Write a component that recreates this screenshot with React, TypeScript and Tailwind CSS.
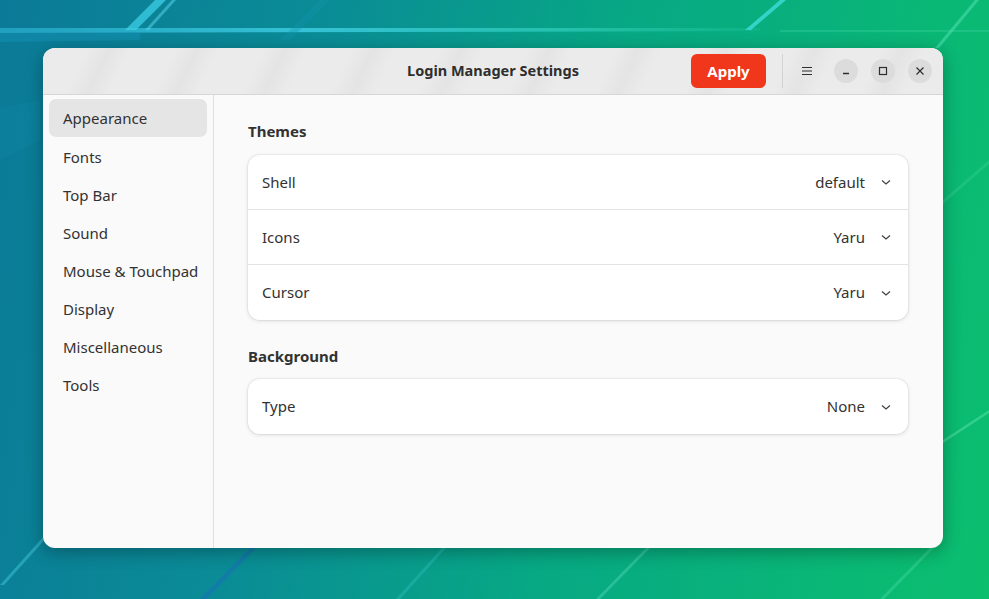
import React from "react";

const Chevron = () => (
  <svg width="12" height="12" viewBox="0 0 12 12" className="ml-[15px] text-[#3d3d3d]">
    <path d="M2 4.5 L6 8 L10 4.5" fill="none" stroke="currentColor" strokeWidth="1.1" />
  </svg>
);

const Row = ({ label, value, last }: { label: string; value: string; last?: boolean }) => (
  <div className={`flex h-[55px] items-center pl-[14px] pr-[16px] ${last ? "" : "border-b border-[#e3e3e3]"}`}>
    <span className="flex-1">{label}</span>
    <span>{value}</span>
    <Chevron />
  </div>
);

export default function App() {
  const items = ["Appearance", "Fonts", "Top Bar", "Sound", "Mouse & Touchpad", "Display", "Miscellaneous", "Tools"];
  return (
    <div
      className="relative w-[989px] h-[599px] overflow-hidden bg-[linear-gradient(100deg,#0b7a98_0%,#0a8c96_30%,#07a884_58%,#0bbf6e_100%)] pt-[48px] pl-[43px]"
      style={{ fontFamily: '"Noto Sans", "Open Sans", sans-serif' }}
    >
      <svg className="absolute inset-0" width="989" height="599" viewBox="0 0 989 599">
        <defs>
          <linearGradient id="hl" x1="0" y1="0" x2="1" y2="0">
            <stop offset="0" stopColor="#2fb8d8" stopOpacity="0.6" />
            <stop offset="0.4" stopColor="#3fd0e6" stopOpacity="0.8" />
            <stop offset="0.75" stopColor="#40e0d0" stopOpacity="0.5" />
            <stop offset="1" stopColor="#40e0c0" stopOpacity="0.1" />
          </linearGradient>
        </defs>
        <path d="M0 28 L760 28 L760 31 L0 33 Z" fill="url(#hl)" />
        <path d="M0 33 L140 32 L140 40 L0 42 Z" fill="#1a9cc0" opacity="0.35" />
        <path d="M125 30 L155 0 L166 0 L136 30 Z" fill="#3ccde6" opacity="0.75" />
        <path d="M145 30 L172 0 L176 0 L149 30 Z" fill="#5ad8ec" opacity="0.5" />
        <path d="M745 30 L780 0 L786 0 L751 30 Z" fill="#40e0e0" opacity="0.75" />
        <path d="M935 48 L975 0 L979 0 L939 48 Z" fill="#60e8c0" opacity="0.45" />
        <path d="M780 30 L989 30 L989 32 L780 32 Z" fill="#50e0b0" opacity="0.25" />
        <path d="M280 40 L320 0 L330 0 L290 40 Z" fill="#1596b0" opacity="0.35" />
        <path d="M0 108 L40 100 L40 140 L0 160 Z" fill="#1288a8" opacity="0.3" />
        <path d="M943 200 L989 160 L989 164 L943 204 Z" fill="#60e8b0" opacity="0.2" />
        <path d="M943 440 L989 410 L989 413 L943 443 Z" fill="#7ff0c0" opacity="0.35" />
        <path d="M0 585 L45 535 L49 535 L4 585 Z" fill="#40c8d8" opacity="0.5" />
        <path d="M200 599 L250 548 L256 548 L206 599 Z" fill="#1a70b8" opacity="0.55" />
        <path d="M396 599 L442 548 L446 548 L400 599 Z" fill="#30c0c0" opacity="0.4" />
        <path d="M596 599 L646 548 L650 548 L600 599 Z" fill="#50d8b8" opacity="0.45" />
        <path d="M880 599 L930 548 L934 548 L884 599 Z" fill="#6ef0c0" opacity="0.25" />
      </svg>

      <div className="relative w-[900px] h-[500px] rounded-[12px] overflow-hidden bg-[#fafafa] shadow-[0_4px_18px_rgba(0,0,0,0.3)] flex flex-col text-[15px] text-[#323232]">
        {/* header */}
        <div className="h-[47px] shrink-0 flex items-center border-b border-[#d6d6d6] bg-[repeating-linear-gradient(115deg,#ebebeb_0px,#ebebeb_40px,#e4e4e4_60px,#ebebeb_80px)]">
          <div className="flex-1 text-center pl-[252px] font-bold text-[14.5px] text-[#2e2e2e]">Login Manager Settings</div>
          <button className="w-[75px] h-[34px] rounded-[6px] bg-[#f0361b] text-white font-bold text-[15px] mr-[16px]">Apply</button>
          <div className="w-px h-[34px] bg-[#d2d2d2] mr-[16px]" />
          <div className="w-[16px] flex items-center justify-center mr-[19px]">
            <svg width="14" height="14" viewBox="0 0 14 14">
              <path d="M2 3.5 H12 M2 7 H12 M2 10.5 H12" stroke="#2e2e2e" strokeWidth="1.1" />
            </svg>
          </div>
          <div className="w-[24px] h-[24px] rounded-full bg-[#dcdcdc] flex items-center justify-center mr-[13px]">
            <svg width="12" height="12" viewBox="0 0 12 12"><path d="M3 8.5 H9" stroke="#2e2e2e" strokeWidth="1.3" /></svg>
          </div>
          <div className="w-[24px] h-[24px] rounded-full bg-[#dcdcdc] flex items-center justify-center mr-[13px]">
            <svg width="12" height="12" viewBox="0 0 12 12"><rect x="2.5" y="2.5" width="7" height="7" fill="none" stroke="#2e2e2e" strokeWidth="1.2" /></svg>
          </div>
          <div className="w-[24px] h-[24px] rounded-full bg-[#dcdcdc] flex items-center justify-center mr-[11px]">
            <svg width="12" height="12" viewBox="0 0 12 12"><path d="M2.5 2.5 L9.5 9.5 M9.5 2.5 L2.5 9.5" stroke="#2e2e2e" strokeWidth="1.2" /></svg>
          </div>
        </div>

        <div className="flex flex-1 min-h-0">
          {/* sidebar */}
          <div className="w-[171px] shrink-0 border-r border-[#e0e0e0] pt-[4px] px-[6px] flex flex-col">
            {items.map((it, i) => (
              <div
                key={it}
                className={`h-[38px] flex items-center pl-[14px] rounded-[7px] ${i === 0 ? "bg-[#e5e5e5] h-[37px] mb-[1px]" : ""}`}
              >
                {it}
              </div>
            ))}
          </div>

          {/* content */}
          <div className="flex-1 pl-[34px] pr-[35px] pt-[26px]">
            <div className="font-bold h-[20px] flex items-center mb-[14px]">Themes</div>
            <div className="bg-white rounded-[12px] shadow-[0_0_0_1px_rgba(0,0,0,0.04),0_1px_4px_rgba(0,0,0,0.12)]">
              <Row label="Shell" value="default" />
              <Row label="Icons" value="Yaru" />
              <Row label="Cursor" value="Yaru" last />
            </div>
            <div className="font-bold h-[20px] flex items-center mt-[26px] mb-[13px]">Background</div>
            <div className="bg-white rounded-[12px] shadow-[0_0_0_1px_rgba(0,0,0,0.04),0_1px_4px_rgba(0,0,0,0.12)]">
              <Row label="Type" value="None" last />
            </div>
          </div>
        </div>
      </div>
    </div>
  );
}
